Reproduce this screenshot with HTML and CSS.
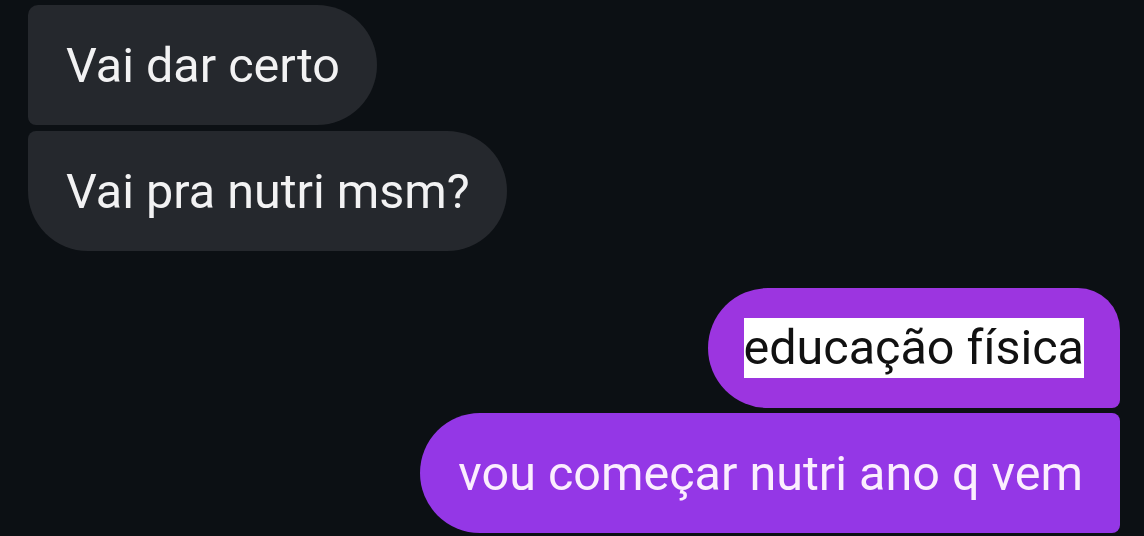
FILE: index.html
```html
<!DOCTYPE html>
<html lang="pt">
<head>
<meta charset="utf-8">
<link rel="stylesheet" href="styles.css">
</head>
<body>
<div class="chat">
  <div class="msg in first">Vai dar certo</div>
  <div class="msg in last">Vai pra nutri msm?</div>
  <div class="spacer"></div>
  <div class="msg out first"><span class="hl">educação física</span></div>
  <div class="msg out last">vou começar nutri ano q vem</div>
</div>
</body>
</html>
```
FILE: styles.css
```css
html, body {
  margin: 0;
  padding: 0;
  background: #0c1014;
  height: 100%;
  overflow: hidden;
}
.chat {
  display: flex;
  flex-direction: column;
  gap: 6px;
  padding: 5px 24px 0 28px;
  font-family: Roboto, "Noto Sans", sans-serif;
  font-size: 48.5px;
}
.spacer {
  height: 25px;
}
.msg {
  height: 120px;
  box-sizing: border-box;
  display: flex;
  align-items: center;
  padding: 0 37px 0 38px;
  white-space: nowrap;
}
.in {
  align-self: flex-start;
  background: #25282d;
  color: #f2f2f3;
}
.in.first {
  border-radius: 10px 60px 60px 8px;
}
.in.last {
  border-radius: 8px 60px 60px 60px;
}
.out {
  align-self: flex-end;
  color: #fbeefe;
}
.out.first {
  background: #9c35e0;
  border-radius: 60px 42px 8px 60px;
  padding: 0 36px 0 36px;
}
.out.last {
  background: #9437e6;
  border-radius: 60px 8px 8px 60px;
  margin-top: -1px;
}
.hl {
  background: #ffffff;
  color: #111111;
  line-height: 60px;
}
```
